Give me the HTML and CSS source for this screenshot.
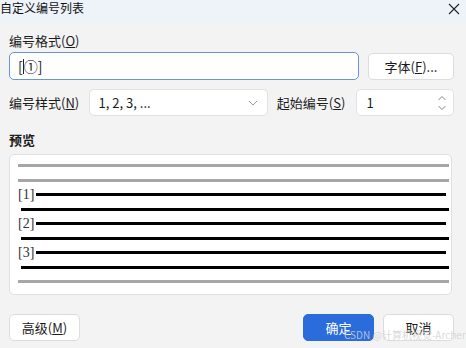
FILE: index.html
```html
<!DOCTYPE html>
<html lang="zh-CN">
<head>
    <title>自定义编号列表</title>
    <link rel="stylesheet" href="styles.css">
</head>
<body>
    <div class="dialog">
        <!-- Title bar -->
        <div class="titlebar">
            <span class="title">自定义编号列表</span>
            <svg class="close" width="12" height="12" viewBox="0 0 12 12">
                <path d="M1 1 L11 11 M11 1 L1 11" stroke="#222" stroke-width="1.1" fill="none"/>
            </svg>
        </div>

        <div class="content">
            <label class="label">编号格式(<u>O</u>)</label>
            <div class="row">
                <div class="field format">[<span class="caret"></span>①]</div>
                <button class="btn font-btn">字体(<u>F</u>)...</button>
            </div>

            <div class="row row2">
                <span class="inline-label">编号样式(<u>N</u>)</span>
                <div class="field select">
                    <span>1, 2, 3, ...</span>
                    <svg width="10" height="6" viewBox="0 0 10 6">
                        <path d="M1 1 L5 5 L9 1" stroke="#999" stroke-width="1" fill="none"/>
                    </svg>
                </div>
                <span class="inline-label">起始编号(<u>S</u>)</span>
                <div class="field spin">
                    <span>1</span>
                    <svg width="10" height="16" viewBox="0 0 10 16">
                        <path d="M1.5 5 L5 1.5 L8.5 5 M1.5 11 L5 14.5 L8.5 11" stroke="#888" stroke-width="1" fill="none"/>
                    </svg>
                </div>
            </div>

            <label class="label preview-label">预览</label>
            <div class="preview">
                <div class="line gray"></div>
                <div class="line gray"></div>
                <div class="item"><span class="num">[1]</span><div class="line black short"></div></div>
                <div class="line black wide"></div>
                <div class="item"><span class="num">[2]</span><div class="line black short"></div></div>
                <div class="line black wide"></div>
                <div class="item"><span class="num">[3]</span><div class="line black short"></div></div>
                <div class="line black wide"></div>
                <div class="line gray"></div>
            </div>

            <div class="footer">
                <button class="btn">高级(<u>M</u>)</button>
                <div class="spacer"></div>
                <button class="btn primary">确定</button>
                <button class="btn">取消</button>
            </div>
        </div>

        <span class="watermark">CSDN @计算机视觉-Archer</span>
    </div>
</body>
</html>
```

FILE: styles.css
```css
body {
    margin: 0;
    background-color: #f3f3f3;
    font-family: "Noto Sans CJK SC", "Noto Sans", sans-serif;
    font-size: 13px;
    color: #1b1b1b;
}

.dialog {
    position: relative;
    width: 466px;
    height: 348px;
    overflow: hidden;
}

/* Title bar */
.titlebar {
    height: 23px;
    background-color: #eef2f9;
    display: flex;
    align-items: flex-start;
    justify-content: space-between;
}

.title {
    font-size: 12px;
    line-height: 16px;
    color: #111;
}

.close {
    margin: 3px 6px 0 0;
}

.content {
    padding: 8px 12px 0 9px;
}

.label {
    display: block;
    line-height: 20px;
    height: 20px;
}

.row {
    display: flex;
    align-items: center;
    gap: 9px;
    margin-top: 1px;
}

.field {
    box-sizing: border-box;
    height: 27px;
    background: #fff;
    border: 1px solid #e2e2e2;
    border-radius: 5px;
    display: flex;
    align-items: center;
    padding: 0 9px;
}

.format {
    width: 350px;
    height: 28px;
    border: 1px solid #6a93d8;
    font-size: 14px;
    padding-left: 8px;
}

.caret {
    display: inline-block;
    width: 1px;
    height: 15px;
    background: #222;
}

.btn {
    box-sizing: border-box;
    height: 27px;
    width: 71px;
    background: #fff;
    border: 1px solid #dcdcdc;
    border-radius: 5px;
    font-family: inherit;
    font-size: 13px;
    color: #1b1b1b;
    padding: 0;
}

.font-btn {
    width: 86px;
}

.row2 {
    margin-top: 9px;
    gap: 0;
}

.inline-label {
    width: 80px;
}

.select {
    width: 180px;
    justify-content: space-between;
    margin-right: 9px;
}

.spin {
    width: 98px;
    justify-content: space-between;
    padding-right: 6px;
}

.preview-label {
    margin-top: 14px;
    font-weight: bold;
}

/* Preview box */
.preview {
    box-sizing: border-box;
    width: 443px;
    height: 141px;
    margin-top: 4px;
    background: #fff;
    border: 1px solid #e0e0e0;
    border-radius: 5px;
    padding: 9px 2px 0 8px;
    display: flex;
    flex-direction: column;
    gap: 11.5px;
}

.line {
    height: 3px;
}

.gray {
    background: #a6a6a6;
}

.black {
    background: #000;
}

.wide {
    margin-left: 3px;
}

.item {
    display: flex;
    align-items: center;
    height: 3px;
}

.num {
    font-family: "Liberation Serif", serif;
    font-size: 14px;
    color: #333;
    width: 18px;
    flex-shrink: 0;
}

.short {
    flex: 1;
    margin-right: 3px;
}

.footer {
    display: flex;
    gap: 9px;
    margin-top: 19px;
}

.spacer {
    flex: 1;
}

.primary {
    background: #2a6cdb;
    border-color: #2a6cdb;
    color: #fff;
}

.watermark {
    position: absolute;
    left: 344px;
    top: 328px;
    font-size: 10px;
    line-height: 14px;
    color: rgba(210, 210, 210, 0.85);
    white-space: nowrap;
}
```
